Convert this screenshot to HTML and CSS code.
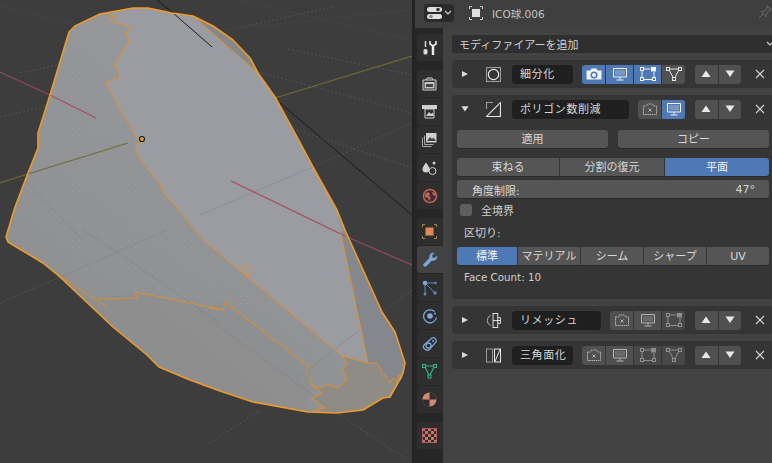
FILE: index.html
```html
<!DOCTYPE html>
<html lang="ja">
<head>
<meta charset="utf-8">
<title>Blender</title>
<link rel="stylesheet" href="styles.css">
</head>
<body>
<svg class="defs" width="0" height="0">
  <defs>
    <symbol id="i-cam" viewBox="0 0 16 14"><path d="M.5 3.500h4l1-2h5l1 2h4v9h-15z" fill="currentColor"/><circle cx="8" cy="8" r="3.500" fill="#4f79b4"/><circle cx="8" cy="8" r="2" fill="currentColor"/></symbol>
    <symbol id="i-camoff" viewBox="0 0 16 14"><path d="M1.500 4h3l1-2h5l1 2h3v8.500h-13z" fill="none" stroke="currentColor" stroke-dasharray="1.500 .6"/><path d="M6.500 6.500l3 3M9.500 6.500l-3 3" stroke="currentColor"/></symbol>
    <symbol id="i-mon" viewBox="0 0 16 14"><path d="M1.500 1.500h13v8.500h-13z" fill="none" stroke="currentColor"/><path d="M3 3h10v5.500h-10z" fill="currentColor" fill-opacity=".25"/><path d="M8 10v2.500M4.500 13h7" stroke="currentColor"/></symbol>
    <symbol id="i-edit" viewBox="0 0 16 14"><path d="M2 3v8M3.500 12.500h9M14 11V5M3.500 2h7" fill="none" stroke="currentColor"/><rect x=".5" y=".5" width="3" height="3" fill="none" stroke="currentColor"/><rect x=".5" y="10.500" width="3" height="3" fill="none" stroke="currentColor"/><rect x="12.500" y="10.500" width="3" height="3" fill="none" stroke="currentColor"/><rect x="11" y="0" width="5" height="4.500" fill="currentColor"/></symbol>
    <symbol id="i-tri" viewBox="0 0 16 14"><path d="M2.500 2h11l-5.500 10z" fill="none" stroke="currentColor"/><rect x=".5" y=".5" width="3" height="3" fill="#505050" stroke="currentColor"/><rect x="12.500" y=".5" width="3" height="3" fill="#505050" stroke="currentColor"/><rect x="6.500" y="10.500" width="3" height="3" fill="#505050" stroke="currentColor"/></symbol>
    <symbol id="i-x" viewBox="0 0 10 10"><path d="M1 1l8 8M9 1l-8 8" stroke="currentColor" stroke-width="1.100" fill="none"/></symbol>
    <symbol id="i-up" viewBox="0 0 10 8"><path d="M5 .5l4.500 6.500h-9z" fill="currentColor"/></symbol>
    <symbol id="i-down" viewBox="0 0 10 8"><path d="M.5 .5h9l-4.500 6.500z" fill="currentColor"/></symbol>
    <symbol id="i-tr" viewBox="0 0 8 8"><path d="M1 1l6 3-6 3z" fill="currentColor"/></symbol>
    <symbol id="i-subsurf" viewBox="0 0 14 14"><rect x=".5" y=".5" width="13" height="13" fill="none" stroke="#9c9c9c"/><circle cx="7" cy="7" r="4.800" fill="none" stroke="#e8e8e8" stroke-width="1.100"/></symbol>
    <symbol id="i-decim" viewBox="0 0 14 14"><path d="M6.500 .5h-6v6M7.500 13.500h6v-6" fill="none" stroke="#9a9a9a"/><path d="M.5 13.500h13v-13zM.5 13.500l13-13" fill="none" stroke="#e8e8e8"/></symbol>
    <symbol id="i-remesh" viewBox="0 0 16 16"><path d="M5 2.500a6 6 0 0 0 0 11" fill="none" stroke="#b8b8b8"/><rect x="7.500" y=".5" width="5" height="15" fill="none" stroke="#e8e8e8"/><path d="M7.500 8h8M12.500 5h3v6h-3" fill="none" stroke="#e8e8e8"/></symbol>
    <symbol id="i-triang" viewBox="0 0 15 14"><rect x=".5" y=".5" width="6" height="13" fill="none" stroke="#9a9a9a"/><rect x="8.500" y=".5" width="6" height="13" fill="none" stroke="#e8e8e8"/><path d="M9 13l5-12" stroke="#e8e8e8"/></symbol>
  </defs>
</svg>
<div class="app">
  <div class="viewport">
    <svg class="scene" viewBox="0 0 412 463" width="412" height="463">
      <defs>
        <linearGradient id="mesh" x1="0.1" y1="0.9" x2="0.7" y2="0.1"><stop offset="0" stop-color="#8d8e8f"/><stop offset="1" stop-color="#98999d"/></linearGradient>
        <pattern id="dots" width="4" height="4" patternUnits="userSpaceOnUse"><rect x="1" y="1" width="1" height="1" fill="#7f8186" fill-opacity=".3"/></pattern>
        <pattern id="lightdots" width="7" height="7" patternUnits="userSpaceOnUse"><rect x="2" y="2" width="1" height="1" fill="#b4b5b8" fill-opacity=".3"/></pattern>
        <path id="outline" d="M6 237L8 242L43 263L60 277L113 327L147 355L159 367L190 380L220 391L253 402L308 412L337 413L363 410L383 398L390 397L403 373L405 363L395 332L382 312L345 230L337 210L313 167L297 137L275 97L258 73L250 58L233 40L213 26L193 16L172 13L148 8L133 8L100 14L75 26L69 32L50 95L38 133L38 148L28 173L15 207Z"/>
      </defs>
      <rect width="412" height="463" fill="#3d3d3d"/>
      <g fill="none" stroke="#5a5a5a" stroke-width="1" stroke-dasharray="1.500 2.500">
        <path d="M0 117L73 100M20 73L57 65M258 72L412 113M288 49L412 75M297 130L412 168M313 167L412 123M237 28L333 7M0 303L58 278M210 443L260 410M337 413L407 460M412 290L382 312"/>
      </g>
      <g fill="none" stroke="#434343">
        <path d="M0 6L100 30M220 30L412 10M240 0L412 40"/>
      </g>
      <path d="M0 72L50 95" stroke="#8c4a58" stroke-width="1.300"/>
      <path d="M345 236L412 265" stroke="#8c4a58" stroke-width="1.300"/>
      <path d="M0 183L28 174" stroke="#6f6b36" stroke-width="1.300"/>
      <path d="M275 98L412 56" stroke="#6f6b36" stroke-width="1.300"/>
      <path d="M157 0L172 12" stroke="#1c1c1c"/>
      <path d="M280 103L412 215" stroke="#1c1c1c"/>
      <use href="#outline" fill="url(#mesh)"/>
      <path d="M193 16L213 26L233 40L250 58L258 73Z" fill="#85878b"/>
      <path d="M341 233L345 230L382 312L395 332L405 363L403 373L402 378L390 383L382 373L377 363L368 363Z" fill="#84878b"/>
      <path d="M6 237L8 242L43 263L60 277L113 327L147 355L159 367L190 380L220 391L253 402L308 412L310 384L309 367L225 302L210 308L135 292L97 299L58 275Z" fill="#8c8c8c" opacity=".5"/>
      <path d="M106 83L139 143L139 158L161 185L187 220L335 350L309 367L225 302L135 292L60 277L6 237L15 207L28 173L38 148L38 133L50 95L69 32L75 26L100 14L108 15L131 28L114 65L120 78Z" fill="url(#lightdots)"/>
      <path d="M187 220L335 350L342 356L338 388L311 384L309 367L225 302Z" fill="url(#dots)"/>
      <path d="M108 15L133 8L148 8L172 13L193 16L258 73L275 97L297 137L313 167L337 210L341 233L368 363L342 356L335 350L203 240L187 220L160 188L161 185L139 158L135 145L139 143L106 83L115 79L120 78L118 72L114 65L129 42L126 33L131 28L109 20L116 17Z" fill="#9a9ca2"/>
      <path d="M342 356L348 363L342 370L347 380L338 388L328 385L318 388L311 384L322 393L312 398L325 408L313 411L337 413L363 410L383 398L390 397L402 378L399 375L396 381L393 378L390 383L386 376L382 373L380 368L377 363L368 363Z" fill="#8f8b85"/>
      <g stroke="#7a7b7e" stroke-opacity=".4" fill="none">
        <path d="M200 215L313 167M210 320L337 413M297 378L360 330M83 230L117 252L220 323M58 278L117 252L167 230M27 183L83 240"/>
      </g>
      <path d="M50 95L96 118" stroke="#a6505f" stroke-width="1.300"/>
      <path d="M231 181L345 236" stroke="#a6505f" stroke-width="1.300"/>
      <path d="M28 174L128 143" stroke="#706c3c" stroke-width="1.300"/>
      <path d="M172 12L212 47" stroke="#1c1c1c"/>
      <g fill="none" stroke="#e58e22" stroke-width=".9">
        <path d="M108 15L116 17L109 20L131 28L126 33L129 42L114 65L118 72L120 78L115 79L106 83L139 143L135 145L139 158L161 185L160 188L187 220L203 240L335 350L342 356L348 363L342 370L347 380L338 388L328 385L318 388L311 384L322 393L312 398L325 408L313 411"/>
        <path d="M193 16L258 73M341 233L368 363L342 356M368 363L377 363L380 368L382 373L386 376L390 383L393 378L396 381L399 375L402 378"/>
        <path d="M58 275L108 308M97 299L138 298L135 292L220 309M225 302L309 367L305 372L312 380L310 384M225 302L223 310L210 308M242 268L248 278L252 270L245 264Z"/>
      </g>
      <use href="#outline" class="edge"/>
      <circle cx="142" cy="139" r="2.500" fill="#f0a030" stroke="#1c1c1c" stroke-width="1.200"/>
    </svg>
  </div>
  <div class="props">
    <header class="props-head">
      <div class="editor-btn">
        <svg width="16" height="14" viewBox="0 0 16 14"><rect x="0" y="1" width="15" height="5" rx="2.500" fill="#e0e0e0"/><rect x="0" y="8" width="15" height="5" rx="2.500" fill="#e0e0e0"/><circle cx="11" cy="3.500" r="1.800" fill="#333"/><circle cx="4" cy="10.500" r="1.800" fill="#888"/></svg>
        <svg width="8" height="6" viewBox="0 0 8 6"><path d="M1 1l3 3 3-3" fill="none" stroke="#cfcfcf" stroke-width="1.200"/></svg>
      </div>
      <svg class="obj-icon" width="14" height="14" viewBox="0 0 14 14"><rect x="3" y="3" width="8" height="8" fill="#e0e0e0"/><path d="M.5 3V.5H3M11 .5h2.500V3M13.500 11v2.500H11M3 13.500H.5V11" fill="none" stroke="#c9c9c9"/></svg>
      <span class="obj-name">ICO球.006</span>
      <svg class="pin" width="14" height="14" viewBox="0 0 14 14"><path d="M9 1l4 4-2 .5-2.500 3-.5 3-5-5 3-.5 3-2.500z" fill="none" stroke="#6c6c6c"/><path d="M1 13l4-4" stroke="#6c6c6c"/></svg>
    </header>
    <div class="props-body">
      <nav class="tabs">
        <div class="tab first"><svg width="16" height="16" viewBox="0 0 16 16"><path d="M3.500 1v6" stroke="#d8d8d8" stroke-width="1.500"/><rect x="1.500" y="9" width="4" height="5.500" rx="1.500" fill="#d8d8d8"/><path d="M11 6v9" stroke="#e8e8e8" stroke-width="2.500"/><path d="M8 1v3l3 2 3-2V1" fill="none" stroke="#e8e8e8" stroke-width="1.600"/></svg></div>
        <div class="tab group"><svg width="15" height="14" viewBox="0 0 15 14"><path d="M1 3h13v10H1z" fill="none" stroke="#d4d4d4"/><path d="M4 3l1-2h5l1 2" fill="none" stroke="#d4d4d4"/><path d="M2.500 5h10v6.500h-10z" fill="#c4c4c4"/><path d="M4 7h7v3H4z" fill="#444"/></svg></div>
        <div class="tab"><svg width="15" height="15" viewBox="0 0 15 15"><path d="M0 1h15v4H0z" fill="#d0d0d0"/><path d="M3 5h9v9H3z" fill="none" stroke="#d0d0d0"/><path d="M4 12l3-4 2 2 1.500-1.500L12 12z" fill="#d0d0d0"/></svg></div>
        <div class="tab"><svg width="15" height="15" viewBox="0 0 15 15"><path d="M4 1h10.500v9.500H4z" fill="#cfcfcf"/><path d="M5 9l3-4 2 2 1.500-1.500L14 9z" fill="#444"/><path d="M2.500 3.500v9h9M.5 5.500v9h9" fill="none" stroke="#a8a8a8"/></svg></div>
        <div class="tab"><svg width="16" height="16" viewBox="0 0 16 16"><path d="M4 2.500c2 3 3.500 4.500 3.500 6.500a3.400 3.400 0 0 1-7 0c0-2 1.500-3.500 3.500-6.500z" fill="#d0d0d0"/><circle cx="10.500" cy="11" r="3.500" fill="#303030" stroke="#d0d0d0"/><circle cx="12" cy="3" r="1.500" fill="#d0d0d0"/></svg></div>
        <div class="tab"><svg width="16" height="16" viewBox="0 0 16 16"><circle cx="8" cy="8" r="6.500" fill="#3a2e2e" stroke="#c0625a" stroke-width="1.500"/><path d="M3 6l3-2 2 2-1 2 2 2-2 3-1-3-3-1zM10 4l3 1 1 3-3-1z" fill="#c0625a"/></svg></div>
        <div class="tab group"><svg width="15" height="15" viewBox="0 0 15 15"><rect x="3.500" y="3.500" width="8" height="8" fill="#e28a56"/><path d="M.5 3V.5H3M12 .5h2.500V3M14.500 12v2.500H12M3 14.500H.5V12" fill="none" stroke="#a08a4c"/></svg></div>
        <div class="tab active"><svg width="16" height="16" viewBox="0 0 16 16"><path d="M2.500 14.500a1.600 1.600 0 0 1-1-2.600l6-5.800a4 4 0 0 1 5-5.100l-2.400 2.500 .4 2 2 .5 2.400-2.500a4 4 0 0 1-5 5l-5.300 5.600a1.800 1.800 0 0 1-2.100.4z" fill="#7ea6d8"/></svg></div>
        <div class="tab"><svg width="16" height="16" viewBox="0 0 16 16"><path d="M3 3v10M3 3h10M3 3l10 10" stroke="#5f86bd" stroke-width="1"/><circle cx="3" cy="3" r="2.300" fill="#7ea6d8"/><circle cx="13" cy="13" r="1.800" fill="#5f86bd"/><circle cx="3" cy="14" r="1.500" fill="#5f86bd"/><circle cx="13.500" cy="3" r="1.300" fill="#5f86bd"/></svg></div>
        <div class="tab"><svg width="16" height="16" viewBox="0 0 16 16"><path d="M12.500 3.500a6.500 6.500 0 1 0 2 6" fill="none" stroke="#7ea6d8" stroke-width="1.300"/><circle cx="8" cy="8" r="2.800" fill="#7ea6d8"/><circle cx="13" cy="5.500" r="1" fill="#7ea6d8"/></svg></div>
        <div class="tab"><svg width="16" height="16" viewBox="0 0 16 16"><path d="M2 9l8-7c2-1 5 1 4 4l-7 8c-3 1-7-2-5-5z" fill="none" stroke="#7ea6d8" stroke-width="1.300"/><circle cx="6.500" cy="9.500" r="2.500" fill="none" stroke="#7ea6d8" stroke-width="1.300"/><circle cx="11" cy="5" r="1" fill="#7ea6d8"/></svg></div>
        <div class="tab"><svg width="15" height="15" viewBox="0 0 15 15"><path d="M2.500 2h10l-5 10z" fill="none" stroke="#2fb88e" stroke-width="1.100"/><rect x=".5" y=".5" width="3" height="3" fill="#333" stroke="#2fb88e"/><rect x="11.500" y=".5" width="3" height="3" fill="#333" stroke="#2fb88e"/><rect x="6" y="11" width="3" height="3" fill="#333" stroke="#2fb88e"/></svg></div>
        <div class="tab"><svg width="15" height="15" viewBox="0 0 15 15"><circle cx="7.500" cy="7.500" r="7" fill="#d08a72"/><path d="M7.500 .5a7 7 0 0 1 7 7h-7zM7.500 7.500v7a7 7 0 0 1-7-7z" fill="#2e2e2e"/></svg></div>
        <div class="tab group"><svg class="checker" width="15" height="15" viewBox="0 0 15 15"><rect width="15" height="15" fill="#c9795f"/><path d="M3 0h3v3H3zM9 0h3v3H9zM0 3h3v3H0zM6 3h3v3H6zM12 3h3v3h-3zM3 6h3v3H3zM9 6h3v3H9zM0 9h3v3H0zM6 9h3v3H6zM12 9h3v3h-3zM3 12h3v3H3zM9 12h3v3H9z" fill="#2e2e2e"/><rect x=".5" y=".5" width="14" height="14" fill="none" stroke="#b25a66"/></svg></div>
      </nav>
      <main class="main">
        <div class="add-mod"><span>モディファイアーを追加</span><svg width="8" height="6" viewBox="0 0 8 6"><path d="M1 1l3 3 3-3" fill="none" stroke="#cfcfcf" stroke-width="1.200"/></svg></div>

        <section class="mod">
          <div class="mod-head">
            <svg class="tri"><use href="#i-tr"/></svg>
            <svg class="mod-icon"><use href="#i-subsurf"/></svg>
            <div class="name w60">細分化</div>
            <div class="toggles">
              <div class="tg on"><svg><use href="#i-cam"/></svg></div>
              <div class="tg on"><svg><use href="#i-mon"/></svg></div>
              <div class="tg on"><svg><use href="#i-edit"/></svg></div>
              <div class="tg"><svg><use href="#i-tri"/></svg></div>
            </div>
            <div class="updown"><div class="ud"><svg><use href="#i-up"/></svg></div><div class="ud"><svg><use href="#i-down"/></svg></div></div>
            <svg class="close"><use href="#i-x"/></svg>
          </div>
        </section>

        <section class="mod">
          <div class="mod-head">
            <svg class="tri"><use href="#i-down"/></svg>
            <svg class="mod-icon"><use href="#i-decim"/></svg>
            <div class="name w116">ポリゴン数削減</div>
            <div class="toggles">
              <div class="tg dim"><svg><use href="#i-camoff"/></svg></div>
              <div class="tg on"><svg><use href="#i-mon"/></svg></div>
            </div>
            <div class="updown"><div class="ud"><svg><use href="#i-up"/></svg></div><div class="ud"><svg><use href="#i-down"/></svg></div></div>
            <svg class="close"><use href="#i-x"/></svg>
          </div>
          <div class="mod-body">
            <div class="actions"><div class="btn">適用</div><div class="btn">コピー</div></div>
            <div class="seg seg-mode"><div>束ねる</div><div>分割の復元</div><div class="sel">平面</div></div>
            <div class="slider"><span>角度制限:</span><span>47°</span></div>
            <div class="check"><span class="box"></span><span>全境界</span></div>
            <div class="label">区切り:</div>
            <div class="seg seg-delim"><div class="sel">標準</div><div>マテリアル</div><div>シーム</div><div>シャープ</div><div>UV</div></div>
            <div class="count">Face Count: 10</div>
          </div>
        </section>

        <section class="mod">
          <div class="mod-head">
            <svg class="tri"><use href="#i-tr"/></svg>
            <svg class="mod-icon"><use href="#i-remesh"/></svg>
            <div class="name w88">リメッシュ</div>
            <div class="toggles">
              <div class="tg dim"><svg><use href="#i-camoff"/></svg></div>
              <div class="tg dim"><svg><use href="#i-mon"/></svg></div>
              <div class="tg dim off"><svg><use href="#i-edit"/></svg></div>
            </div>
            <div class="updown"><div class="ud"><svg><use href="#i-up"/></svg></div><div class="ud"><svg><use href="#i-down"/></svg></div></div>
            <svg class="close"><use href="#i-x"/></svg>
          </div>
        </section>

        <section class="mod">
          <div class="mod-head">
            <svg class="tri"><use href="#i-tr"/></svg>
            <svg class="mod-icon"><use href="#i-triang"/></svg>
            <div class="name w60">三角面化</div>
            <div class="toggles">
              <div class="tg dim"><svg><use href="#i-camoff"/></svg></div>
              <div class="tg dim"><svg><use href="#i-mon"/></svg></div>
              <div class="tg dim off"><svg><use href="#i-edit"/></svg></div>
              <div class="tg dim off"><svg><use href="#i-tri"/></svg></div>
            </div>
            <div class="updown"><div class="ud"><svg><use href="#i-up"/></svg></div><div class="ud"><svg><use href="#i-down"/></svg></div></div>
            <svg class="close"><use href="#i-x"/></svg>
          </div>
        </section>
      </main>
    </div>
  </div>
</div>
</body>
</html>
```

FILE: styles.css
```css
* { box-sizing: border-box; }
html, body { margin: 0; padding: 0; background: #232323; }
body { width: 772px; height: 463px; overflow: hidden; font-family: "DejaVu Sans", "Noto Sans CJK JP", sans-serif; font-size: 11px; color: #cfcfcf; }
.defs { position: absolute; }
.app { display: flex; width: 772px; height: 463px; overflow: hidden; }
.viewport { width: 412px; height: 463px; flex: none; }
.scene { display: block; }
.edge { fill: none; stroke: #ef9a2a; stroke-width: 1.600; stroke-linejoin: round; }
.props { width: 360px; flex: none; border-left: 3px solid #232323; background: #424242; display: flex; flex-direction: column; }

.props-head { height: 28px; flex: none; display: flex; align-items: center; padding-left: 9px; background: #3f3f3f; position: relative; }
.editor-btn { width: 30px; height: 18px; margin-top: -2px; border-radius: 4px; background: #2a2a2a; display: flex; align-items: center; justify-content: center; gap: 1px; }
.obj-icon { margin-left: 15px; margin-top: -2px; }
.obj-name { margin-left: 9px; margin-top: -2px; color: #c4c4c4; font-size: 10.500px; }
.pin { position: absolute; right: 0; top: 5px; }

.props-body { flex: 1; display: flex; min-height: 0; }
.tabs { width: 28px; flex: none; background: #262626; padding-left: 2px; display: flex; flex-direction: column; }
.tab { height: 27px; margin-top: 1px; flex: none; background: #2e2e2e; border-radius: 3px 0 0 3px; display: flex; align-items: center; justify-content: center; padding-right: 1px; }
.tab.first { margin-top: 6px; }
.tab.group { margin-top: 9px; }
.tab.active { background: #424242; }

.main { flex: 1; min-width: 0; padding: 7px 0 0 9px; background: #424242; overflow: hidden; }
.add-mod { height: 18px; width: 330px; margin-right: -10px; border-radius: 3px; background: #2f2f2f; display: flex; align-items: center; justify-content: space-between; padding: 0 0 0 7px; }
.add-mod svg { margin-right: 8px; }

.mod { margin-top: 7px; width: 322px; background: #353535; border-radius: 4px 0 0 4px; }
.mod-head { height: 28px; display: flex; align-items: center; padding-left: 9px; }
.tri { width: 8px; height: 8px; color: #dcdcdc; flex: none; }
.mod-icon { width: 15px; height: 15px; margin-left: 17px; flex: none; }
.name { height: 19px; margin-left: 11px; flex: none; border-radius: 4px; background: #1f1f1f; color: #d8d8d8; line-height: 19px; padding-left: 8px; letter-spacing: .6px; }
.w60 { width: 61px; }
.w88 { width: 89px; }
.w116 { width: 117px; }
.toggles { margin-left: auto; display: flex; gap: 1px; }
.tg { width: 27px; height: 19px; background: #505050; display: flex; align-items: center; justify-content: center; color: #e4e4e4; }
.tg:first-child { width: 23px; border-radius: 3px 0 0 3px; }
.tg:last-child { width: 23px; border-radius: 0 3px 3px 0; }
.tg svg { width: 16px; height: 14px; }
.tg.on { background: #4f79b4; color: #f2f2f2; }
.tg.dim { color: #b4b4b4; }
.tg.off { background: #484848; color: #8e8e8e; }
.updown { margin-left: 10px; display: flex; gap: 1px; }
.ud { width: 22.500px; height: 19px; background: #505050; display: flex; align-items: center; justify-content: center; color: #e8e8e8; }
.ud:first-child { border-radius: 3px 0 0 3px; }
.ud:last-child { border-radius: 0 3px 3px 0; }
.ud svg { width: 10px; height: 8px; }
.close { width: 10px; height: 10px; margin-left: 14px; margin-right: 9px; flex: none; color: #d8d8d8; }

.mod-body { padding: 7px 5px 0 5px; height: 176px; }
.actions { display: flex; justify-content: space-between; }
.btn { width: 151px; height: 18px; border-radius: 3px; background: #555; text-align: center; line-height: 19px; box-shadow: 0 1px 0 #2a2a2a; color: #d8d8d8; }
.seg { display: flex; gap: 1px; }
.seg > div { height: 18px; background: #555; text-align: center; line-height: 19px; color: #d8d8d8; box-shadow: 0 1px 0 #2a2a2a; }
.seg > div:first-child { border-radius: 3px 0 0 3px; }
.seg > div:last-child { border-radius: 0 3px 3px 0; }
.seg > .sel { background: #4f79b4; color: #f2f2f2; }
.seg-mode { margin-top: 10px; }
.seg-mode > div:nth-child(1) { width: 102px; }
.seg-mode > div:nth-child(2) { width: 104px; }
.seg-mode > div:nth-child(3) { width: 104px; }
.slider { margin-top: 4px; width: 312px; height: 18px; border-radius: 3px; background: #555; box-shadow: 0 1px 0 #2a2a2a; display: flex; justify-content: space-between; align-items: center; padding: 1px 14px 0 15px; color: #d8d8d8; }
.check { display: flex; align-items: center; margin-top: 6px; margin-left: 3px; height: 12px; gap: 9px; }
.box { width: 12px; height: 12px; border-radius: 3px; background: #5e5e5e; }
.label { margin: 11px 0 0 7px; height: 14px; line-height: 14px; }
.seg-delim { margin-top: 6px; }
.seg-delim > div { width: 62px; }
.seg-delim > div:first-child { width: 60px; }
.count { margin: 6px 0 0 7px; height: 13px; line-height: 13px; font-size: 10.300px; }
```
